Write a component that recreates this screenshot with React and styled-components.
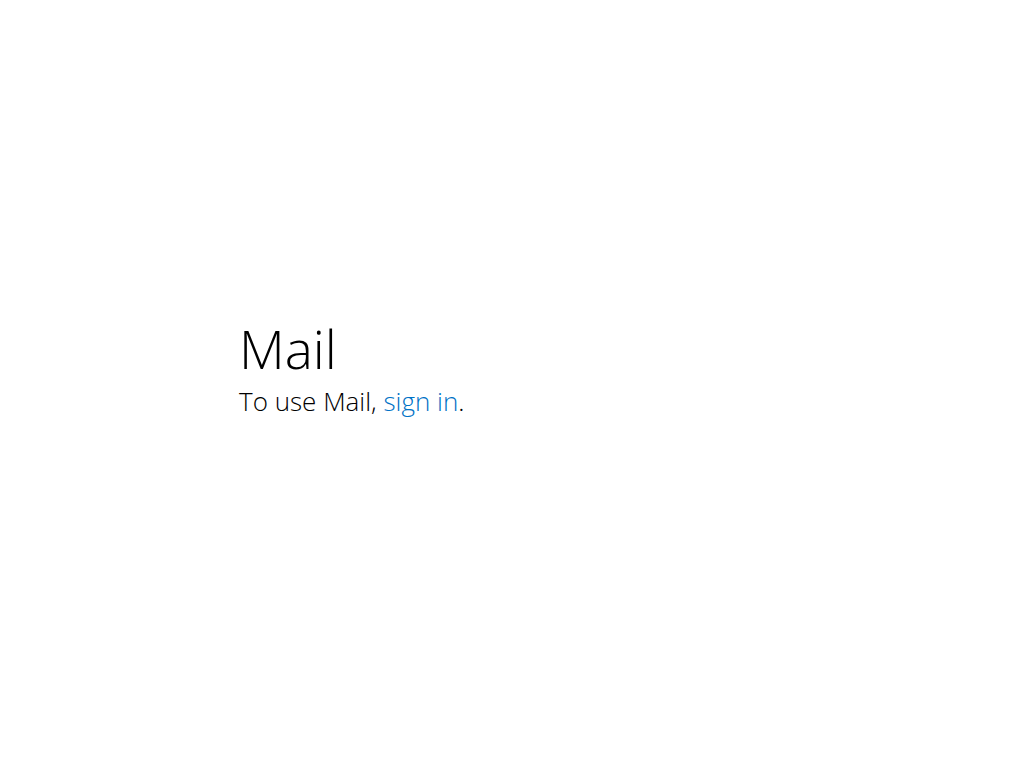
import React from "react";
import styled, { createGlobalStyle } from "styled-components";

const GlobalStyle = createGlobalStyle`
  html, body {
    margin: 0;
    padding: 0;
    background: #ffffff;
  }
  body {
    font-family: "Open Sans", "Noto Sans", "Liberation Sans", sans-serif;
  }
`;

const Page = styled.div`
  width: 1024px;
  height: 768px;
  box-sizing: border-box;
  padding: 318px 0 0 239px;
  display: flex;
  flex-direction: column;
`;

const Title = styled.h1`
  margin: 0;
  font-size: 53px;
  font-weight: 300;
  line-height: 62px;
  color: #000000;
`;

const Message = styled.p`
  margin: 0;
  font-size: 26px;
  font-weight: 300;
  line-height: 42px;
  color: #000000;
`;

const SignIn = styled.a`
  color: #0072c6;
  text-decoration: none;
  cursor: pointer;
`;

export default function App() {
  return (
    <>
      <GlobalStyle />
      <Page>
        <Title>Mail</Title>
        <Message>
          To use Mail, <SignIn>sign in</SignIn>.
        </Message>
      </Page>
    </>
  );
}
